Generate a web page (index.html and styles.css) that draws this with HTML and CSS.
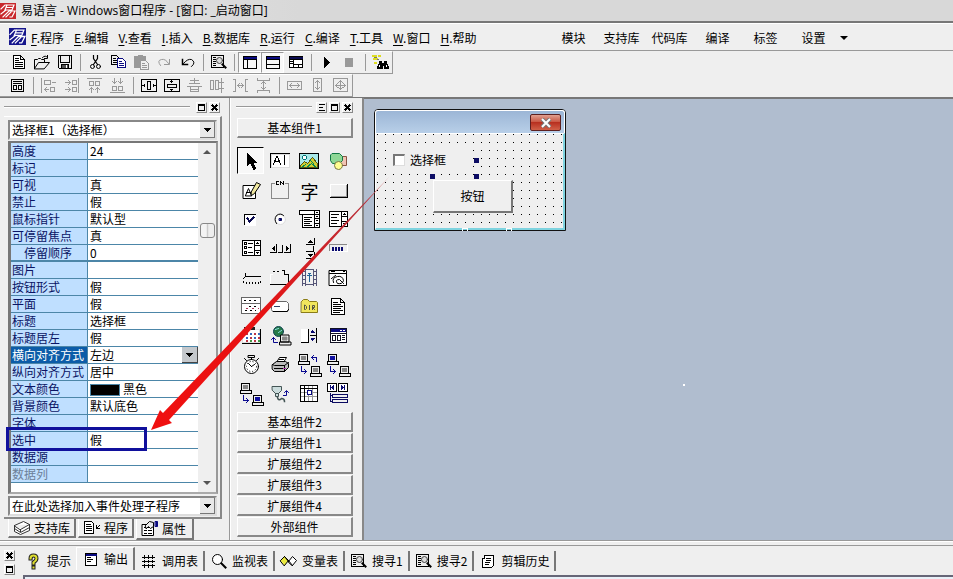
FILE: index.html
```html
<!DOCTYPE html>
<html lang="zh-CN">
<head>
<meta charset="utf-8">
<title>易语言</title>
<link rel="stylesheet" href="styles.css">
</head>
<body>
<svg class="defs" aria-hidden="true">
  <symbol id="pc" viewBox="-.5 -.5 12 11" overflow="visible"><path fill="#eee" d="M1 0H9V7H1ZM0 7H11V10H0Z"/><path stroke="#888" fill="#888" d="M3 2H7V5H3Z"/></symbol>
  <symbol id="pcb" viewBox="-.5 -.5 12 11" overflow="visible"><path fill="#eee" d="M1 0H9V7H1ZM0 7H11V10H0Z"/><path stroke="#1010a0" fill="#1010a0" d="M3 2H7V5H3Z"/></symbol>
  <symbol id="logo" viewBox="0 0 16 16"><path stroke="none" fill="currentColor" d="M0 0H16V16H0Z"/><path stroke="#fff" stroke-width="1.2" d="M1 6L5 2H14L12 7H5L7 2M6 4.500H13M1 11L6 7M3 14L9 8H15L12 14H10M6 14L11 9"/></symbol>
  <symbol id="find" viewBox="-.5 -.5 17 17"><path shape-rendering="crispEdges" d="M1 1H13V13H1ZM3 3H5M3 5H5M3 7H5M3 9H5M3 11H5"/><circle cx="9" cy="6" r="3" fill="#ddd" stroke="#444"/><path stroke-width="2" d="M12 10L15 13"/></symbol>
</svg>

<header class="title"><svg class="i logo-red" width="16" height="16"><use href="#logo"/></svg><h1>易语言 - Windows窗口程序 - [窗口: _启动窗口]</h1></header>

<nav class="menu" aria-label="菜单">
  <svg class="i logo-blue" width="17" height="17"><use href="#logo"/></svg>
  <button><u>F</u>.程序</button><button><u>E</u>.编辑</button><button><u>V</u>.查看</button><button><u>I</u>.插入</button><button><u>B</u>.数据库</button><button><u>R</u>.运行</button><button><u>C</u>.编译</button><button><u>T</u>.工具</button><button><u>W</u>.窗口</button><button><u>H</u>.帮助</button>
  <div class="quick"><button>模块</button><button>支持库</button><button>代码库</button><button>编译</button><button>标签</button><button>设置</button><i class="tri"></i></div>
</nav>

<div class="bars">
<div class="bar" role="toolbar" aria-label="标准">
  <button aria-label="新建"><svg class="i" viewBox="-.5 -.5 17 17"><path fill="#fff" d="M3 1H10L14 5V14H3ZM10 1V5H14M5 4H8M5 6H8M5 8H12M5 10H12M5 12H12"/></svg></button>
  <button aria-label="打开"><svg class="i s" viewBox="-.5 -.5 17 17"><path d="M1 14V5H4L5 4H7L8 5H11V8M1 14L5 8H16L11 14ZM9 3Q12 0 14 3M14 1V4H11"/></svg></button>
  <button aria-label="保存"><svg class="i" viewBox="-.5 -.5 17 17"><path d="M2 1H15V14H3L2 13ZM4 1V8H13V1"/><path fill="#555" d="M5 10H12V14H5Z"/><path stroke="#fff" d="M10 11V13"/></svg></button>
  <i class="sep"></i>
  <button aria-label="剪切"><svg class="i s" viewBox="-.5 -.5 17 17"><path stroke-width="1.200" d="M6 1V4L10 10M10 1V4L6 10"/><circle cx="5" cy="12" r="2"/><circle cx="11" cy="12" r="2"/></svg></button>
  <button aria-label="复制"><svg class="i" viewBox="-.5 -.5 17 17"><path d="M1 1H6L8 3V10H1ZM3 4H5M3 6H6M3 8H6"/><path stroke="#0a0a80" fill="#fff" d="M7 4H12L15 7V13H7ZM9 7H11M9 9H13M9 11H13"/></svg></button>
  <button aria-label="粘贴"><svg class="i g" viewBox="-.5 -.5 17 17"><path fill="#999" d="M1 2H5V1H9V2H12V13H1Z"/><path fill="#eee" d="M7 6H12L15 9V15H7ZM9 9H11M9 11H13M9 13H13"/></svg></button>
  <button aria-label="重做"><svg class="i g s" viewBox="-.5 -.5 17 17"><path d="M4 11Q0 6 5 5Q9 4 12 9M13 5V10H8"/></svg></button>
  <button aria-label="撤销"><svg class="i s" viewBox="-.5 -.5 17 17"><path d="M12 12Q17 8 12 5Q8 4 4 9"/><path stroke-width="1.500" d="M3 5V10H8"/></svg></button>
  <i class="sep"></i>
  <button aria-label="查找"><svg class="i s"><use href="#find"/></svg></button>
  <i class="sep"></i>
  <button class="on" aria-label="工作夹"><svg class="i" viewBox="-.5 -.5 17 17"><path d="M2 2H15V14H2ZM6 5V14"/><path stroke="#0a0a80" stroke-width="2" d="M3 3H14"/><path d="M2 5H15"/></svg></button>
  <button class="on" aria-label="状态夹"><svg class="i" viewBox="-.5 -.5 17 17"><path d="M2 2H15V14H2ZM2 10H15"/><path stroke="#0a0a80" stroke-width="2" d="M3 3H14"/><path d="M2 5H15"/></svg></button>
  <button aria-label="组件箱"><svg class="i" viewBox="-.5 -.5 17 17"><path fill="#fff" d="M2 2H15V13H2ZM6 5V13M6 10H15M11 10V13"/><path stroke="#0a0a50" stroke-width="2" d="M3 3H14"/><path d="M2 5H15M3 7H5M3 9H5"/></svg></button>
  <i class="sep"></i>
  <button aria-label="运行"><svg class="i" viewBox="-.5 -.5 17 17"><path fill="#000" d="M6 3L11 8L6 13Z"/></svg></button>
  <button aria-label="停止"><svg class="i g" viewBox="-.5 -.5 17 17"><path fill="#999" d="M4 4H11V12H4Z"/></svg></button>
  <i class="sep"></i>
  <button aria-label="搜寻"><svg class="i" viewBox="-.5 -.5 17 17"><path stroke="#dddd20" stroke-width="2" d="M0 1H3M6 1H7M1 4H4M2 8H3"/><path stroke="#777" d="M2 3H4M5 5H6"/><path fill="#000" d="M7 7H9V9H12V7H14V9L16 12V14H12V11H10V14H5V12L7 9Z"/><path stroke="#fff" d="M7 11V12M14 11V12"/></svg></button>
</div>
<div class="bar" role="toolbar" aria-label="对齐">
  <button aria-label="窗口"><svg class="i" viewBox="-.5 -.5 17 17"><path d="M2 2H14V14H2ZM4 4H12M4 6H12M4 8H7V12H4ZM9 8H12V12H9Z"/></svg></button>
  <i class="sep"></i>
  <button aria-label="左对齐"><svg class="i g" viewBox="-.5 -.5 17 17"><path d="M1 1V15M4 3H10V7H4ZM12 5H15M4 12H8M6 10L4 12L6 14M10 10H14V14H10Z"/></svg></button>
  <button aria-label="右对齐"><svg class="i g" viewBox="-.5 -.5 17 17"><path d="M15 1V15M2 5H7M5 3L7 5L5 7M9 3H13V7H9ZM2 12H7M5 10L7 12L5 14M9 10H13V14H9Z"/></svg></button>
  <button aria-label="顶对齐"><svg class="i g" viewBox="-.5 -.5 17 17"><path d="M1 1H15M3 4H7V8H3ZM9 4H13V8H9ZM5 10V15M3 12L5 10L7 12M11 10V15M9 12L11 10L13 12"/></svg></button>
  <button aria-label="底对齐"><svg class="i g" viewBox="-.5 -.5 17 17"><path d="M1 15H15M3 9H7V13H3ZM9 9H13V13H9ZM5 1V6M3 4L5 6L7 4M11 1V6M9 4L11 6L13 4"/></svg></button>
  <i class="sep"></i>
  <button aria-label="水平居中"><svg class="i" viewBox="-.5 -.5 17 17"><path d="M1 2H16V14H1ZM7 4H10V12H7ZM1 8H4M13 8H16M4 7V9M13 7V9"/></svg></button>
  <button aria-label="垂直居中"><svg class="i" viewBox="-.5 -.5 17 17"><path d="M1 2H16V14H1ZM4 7H13V10H4ZM8 2V5M8 12V14M7 4H9M7 12H9"/></svg></button>
  <button aria-label="水平等距"><svg class="i g" viewBox="-.5 -.5 17 17"><path d="M4 3H12M8 1V6M3 6H13M1 9H15M4 9V14H12V9M5 12H11"/></svg></button>
  <button aria-label="垂直等距"><svg class="i g" viewBox="-.5 -.5 17 17"><path d="M1 3H4V12H1ZM6 3H9V12H6ZM12 1V15M10 5H14M10 11H14"/></svg></button>
  <button aria-label="等宽间隔"><svg class="i g" viewBox="-.5 -.5 17 17"><path d="M1 2H3V14H1M15 2H13V14H15M5 8H11M7 6L5 8L7 10M9 6L11 8L9 10"/></svg></button>
  <button aria-label="等高间隔"><svg class="i g" viewBox="-.5 -.5 17 17"><path d="M2 1V3H14V1M2 15V13H14V15M8 4V12M6 6L8 4L10 6M6 10L8 12L10 10"/></svg></button>
  <i class="sep"></i>
  <button aria-label="同宽"><svg class="i g" viewBox="-.5 -.5 17 17"><path d="M1 4H15V12H1ZM3 8H13M5 6L3 8L5 10M11 6L13 8L11 10"/></svg></button>
  <button aria-label="同高"><svg class="i g" viewBox="-.5 -.5 17 17"><path d="M4 1H12V14H4ZM8 3V12M6 5L8 3L10 5M6 10L8 12L10 10"/></svg></button>
  <button aria-label="同大小"><svg class="i g" viewBox="-.5 -.5 17 17"><path d="M1 1H15V14H1ZM8 3V12M3 8H13M6 5L8 3L10 5M6 10L8 12L10 10M5 6L3 8L5 10M11 6L13 8L11 10"/></svg></button>
</div>
</div>

<main>
<aside class="dock">
  <div class="grip"><i></i><button aria-label="最大化"><svg class="i" viewBox="-.5 -.5 9 9"><path d="M1 1H7V7H1ZM1 2H7"/></svg></button><button aria-label="关闭"><svg class="i" viewBox="-.5 -.5 9 9"><path stroke-width="2" d="M2 2L6 6M6 2L2 6"/></svg></button></div>
  <div class="panel">
    <select class="combo" aria-label="组件"><option>选择框1（选择框）</option></select>
    <div class="list">
      <table>
        <tr><th>高度</th><td>24</td></tr>
        <tr><th>标记</th><td></td></tr>
        <tr><th>可视</th><td>真</td></tr>
        <tr><th>禁止</th><td>假</td></tr>
        <tr><th>鼠标指针</th><td>默认型</td></tr>
        <tr><th>可停留焦点</th><td>真</td></tr>
        <tr class="end"><th class="sub">停留顺序</th><td>0</td></tr>
        <tr><th>图片</th><td></td></tr>
        <tr><th>按钮形式</th><td>假</td></tr>
        <tr><th>平面</th><td>假</td></tr>
        <tr><th>标题</th><td>选择框</td></tr>
        <tr><th>标题居左</th><td>假</td></tr>
        <tr class="cur"><th><label for="align">横向对齐方式</label></th><td><select id="align"><option>左边</option></select></td></tr>
        <tr><th>纵向对齐方式</th><td>居中</td></tr>
        <tr><th>文本颜色</th><td><i class="swatch"></i>黑色</td></tr>
        <tr><th>背景颜色</th><td>默认底色</td></tr>
        <tr><th>字体</th><td></td></tr>
        <tr class="mark"><th>选中</th><td>假</td></tr>
        <tr><th>数据源</th><td></td></tr>
        <tr class="off"><th>数据列</th><td></td></tr>
      </table>
      <div class="scroll"><i class="up"></i><i class="thumb"></i><i class="down"></i></div>
    </div>
    <select class="combo" aria-label="事件"><option>在此处选择加入事件处理子程序</option></select>
  </div>
  <div class="tabs">
    <button><svg class="i s" viewBox="-.5 -.5 17 17"><path fill="#fff" stroke="#333" d="M1 6L10 2L16 5L7 10ZM1 6V9L7 13L16 8V5M1 9V12L7 15L16 11V8M7 10V12"/></svg>支持库</button>
    <button><svg class="i" viewBox="-.5 -.5 17 17"><path fill="#fff" d="M1 2H8L10 4V14H1ZM3 5H7M3 7H8M3 9H8M3 11H8M16 6L13 9M13 6V9H16"/></svg>程序</button>
    <button class="active"><svg class="i s" viewBox="-.5 -.5 17 17"><path fill="#fff" d="M1 4H12V15H1ZM3 7H5M7 7H10M3 10H5M7 10H10M3 13H5M7 13H10"/><path fill="#eee" d="M4 5L8 1L12 2V6L9 8L7 6L5 8Z"/><path stroke="#0a0a80" fill="#0a0a80" d="M14 1H16V6H14Z"/></svg>属性</button>
  </div>
</aside>

<aside class="palette">
  <div class="grip"><i></i><button aria-label="列表"><svg class="i" viewBox="-.5 -.5 9 9"><path d="M2 1H7M2 4H5M2 7H7"/></svg></button><button aria-label="最大化"><svg class="i" viewBox="-.5 -.5 9 9"><path d="M1 1H7V7H1ZM1 2H7"/></svg></button><button aria-label="关闭"><svg class="i" viewBox="-.5 -.5 9 9"><path stroke-width="2" d="M2 2L6 6M6 2L2 6"/></svg></button></div>
  <button class="group">基本组件1</button>
  <div class="tools">
    <button class="on" aria-label="指针"><svg class="i" viewBox="-.5 -.5 21 21"><path fill="#000" d="M6 2V14L9 11L12 18H13L14 17L11 11H15Z"/></svg></button>
    <button aria-label="编辑框"><svg class="i" viewBox="-.5 -.5 21 21"><path fill="#fff" stroke="#ddd" d="M1 3H19V16H1Z"/><path d="M0 16V2H19M3 13L6 5H7L10 13M4 10H9M14 4V13"/></svg></button>
    <button aria-label="图片框"><svg class="i" viewBox="-.5 -.5 21 21"><path fill="#a8e8e8" d="M0 2H19V17H0Z"/><path fill="#cccc30" stroke="#555510" d="M1 14L5 10L8 12L13 6L18 12V16H1Z"/><circle cx="5" cy="6" r="2" fill="#fff" stroke="#077"/><path stroke="#085" d="M2 16L6 13M11 9L14 12M7 16L12 12L17 16"/></svg></button>
    <button aria-label="外形框"><svg class="i s" viewBox="-.5 -.5 21 21"><path fill="#f2c4b4" stroke="#854" d="M9 5H18V14H10Z"/><path fill="#8ed896" stroke="#174" d="M4 2H11L14 5V9L11 12H4L2 9V4Z"/><circle cx="10" cy="14" r="4" fill="#ffff90" stroke="#774"/></svg></button>
    <button aria-label="画板"><svg class="i s" viewBox="-.5 -.5 21 21"><path fill="#fff" d="M2 5H14V18H2ZM4 15L7 8L10 15ZM5 12H9"/><path fill="#f0e8a0" d="M10 11L15 2L19 4L13 13L10 15Z"/></svg></button>
    <button aria-label="分组框"><svg class="i" viewBox="-.5 -.5 21 21"><path stroke="#888" d="M4 3H1V18H18V3H15"/><path d="M8 1H6V4H8M10 4V1L13 4V1"/></svg></button>
    <button aria-label="标签"><span class="zi">字</span></button>
    <button aria-label="按钮"><svg class="i" viewBox="-.5 -.5 21 21"><path stroke="#fff" d="M2 16V4H18"/><path d="M2 17H19V4"/><path stroke="#999" d="M3 16H18V5"/></svg></button>
    <button aria-label="选择框"><svg class="i" viewBox="-.5 -.5 21 21"><path stroke="#fff" fill="#fff" d="M4 6H14V16H4Z"/><path d="M3 15V5H14"/><path stroke="#0a0a50" stroke-width="2" d="M6 9L8 12L12 8"/></svg></button>
    <button aria-label="单选框"><svg class="i s" viewBox="-.5 -.5 21 21"><circle cx="10" cy="10" r="5" fill="#fff" stroke="#ddd"/><path d="M6 14Q3 10 6 6Q10 3 13 6"/><path fill="#0a0a60" stroke="#0a0a60" d="M9 9H11V11H9Z"/></svg></button>
    <button aria-label="组合框"><svg class="i" viewBox="-.5 -.5 21 21"><path fill="#fff" d="M0 1H20V5H0ZM3 5H20V18H3ZM15 1V18M5 8H12M5 10H10M5 12H12M5 14H10M5 16H12M15 9H20M15 14H20M17 3H18M17 7H18M17 11H18M17 16H18"/></svg></button>
    <button aria-label="列表框"><svg class="i" viewBox="-.5 -.5 21 21"><path fill="#fff" d="M1 2H19V17H1ZM13 2V17M3 5H10M3 8H8M3 11H10M3 14H8M13 7H19M13 12H19M15 5H17M16 4V5M15 14H17M16 15V14"/></svg></button>
    <button aria-label="选择列表框"><svg class="i" viewBox="-.5 -.5 21 21"><path fill="#fff" d="M1 2H19V17H1ZM13 2V17M3 4H5V6H3ZM3 8H5V10H3ZM3 13H5V15H3ZM7 5H11M7 9H10M7 14H11M13 7H19M13 12H19M15 5H17M16 4V5M15 14H17M16 15V14"/></svg></button>
    <button aria-label="横向滚动条"><svg class="i" viewBox="-.5 -.5 21 21"><path fill="#000" d="M4 8V12L2 10ZM16 8V12L18 10Z"/><path d="M0 14H6V6M8 14H12V7M14 14H20V6"/></svg></button>
    <button aria-label="纵向滚动条"><svg class="i" viewBox="-.5 -.5 21 21"><path fill="#000" d="M9 4H13L11 2ZM9 16H13L11 18Z"/><path d="M7 6H15V0M7 13H14V8M7 20H15V14"/></svg></button>
    <button aria-label="进度条"><svg class="i" viewBox="-.5 -.5 21 21"><path stroke="#888" d="M1 12V6H18"/><path stroke="#fff" d="M2 13H19V7"/><path stroke="#0a0a70" stroke-width="2" stroke-linecap="butt" d="M4 8V12M7 8V12M10 8V12M13 8V12"/></svg></button>
    <button aria-label="滑块条"><svg class="i" viewBox="-.5 -.5 21 21"><path d="M4 6V9L2 11M4 9H19M2 14V15M5 15V16M8 15V16M11 15V16M14 15V16M17 15V16M19 14V15"/></svg></button>
    <button aria-label="选择夹"><svg class="i" viewBox="-.5 -.5 21 21"><path stroke="#fff" d="M0 17V7H2"/><path d="M0 17H18V7M3 4H4M7 4H8M12 3H13M14 3V7H17"/></svg></button>
    <button aria-label="影像框"><svg class="i" viewBox="-.5 -.5 21 21"><path stroke="#557" d="M3 2V18M6 2V18M14 2V18M17 2V18M3 4H6M3 8H6M3 12H6M3 16H6M14 4H17M14 8H17M14 12H17M14 16H17M7 2H13M7 17H13"/><path stroke="#269" d="M9 6H11M10 6V14M8 8H12"/></svg></button>
    <button aria-label="超级编辑框"><svg class="i s" viewBox="-.5 -.5 21 21"><path fill="#fff" d="M1 3H18V18H1ZM1 6H18M3 4H6M15 4H16"/><path d="M5 15Q3 10 9 9Q14 8 15 13Q14 17 9 16Q6 12 11 12L15 16M3 11L7 8"/></svg></button>
    <button aria-label="日期框"><svg class="i" viewBox="-.5 -.5 21 21"><path fill="#fff" stroke="#666" d="M0 1H19V17H0ZM0 7H19"/><path stroke-dasharray="2 3" d="M2 4H17M7 10H17M3 14H14"/><path stroke="#a35" stroke-dasharray="2 4" d="M4 12H17"/></svg></button>
    <button aria-label="文本框"><svg class="i s" viewBox="-.5 -.5 21 21"><path fill="#fff" stroke="#666" d="M3 5H16L18 7V13L16 15H2L1 13V7Z"/><path stroke="#346" d="M4 10H9"/><path d="M3 15H17L18 13"/></svg></button>
    <button aria-label="目录框"><svg class="i s" viewBox="-.5 -.5 21 21"><path fill="#f1e65d" stroke="#8a7c18" d="M2 5L4 3H8L10 5H17L18 6V16H2Z"/><path stroke="#554" d="M5 9V13H6L7 12V10L6 9ZM10 9V13M13 13V9H15V11H13L15 13"/></svg></button>
    <button aria-label="文件框"><svg class="i" viewBox="-.5 -.5 21 21"><path fill="#fff" d="M3 2H12L16 6V18H3ZM12 2V6H16M5 6H9M5 8H12M5 10H14M5 12H12M5 14H14M5 16H11"/></svg></button>
    <button aria-label="月历"><svg class="i" viewBox="-.5 -.5 21 21"><path fill="#fff" stroke="#ddd" d="M1 4H18V17H1Z"/><path d="M1 18H19V4"/><path stroke="#222" stroke-width="3" stroke-dasharray="4 3" d="M2 3H14"/><path stroke="#b34" stroke-width="2" stroke-dasharray="2 6" d="M4 8H18M8 12H18M4 15H18"/><path stroke="#36b" stroke-width="2" stroke-dasharray="2 6" d="M8 8H18M4 12H18"/><path stroke="#494" stroke-width="2" stroke-dasharray="2 6" d="M8 15H18"/></svg></button>
    <button aria-label="网络"><svg class="i s" viewBox="-.5 -.5 21 21"><circle cx="8" cy="6" r="5" fill="#267a48" stroke="#145"/><path stroke="#8dd" d="M5 4L8 3M8 7L11 5"/><path stroke="#0a0a90" d="M3 12V17H7M1 14L3 12L5 14"/><use href="#pc" x="9" y="9" width="12" height="11"/></svg></button>
    <button aria-label="调节器"><svg class="i" viewBox="-.5 -.5 21 21"><path stroke="#fff" fill="#fff" d="M2 4H8V16H2Z"/><path d="M2 17H9V4M17 3V17M11 10H17"/><path stroke="#0a0a70" fill="#0a0a70" d="M12 7H15L13 5ZM12 13H15L13 15Z"/></svg></button>
    <button aria-label="窗口"><svg class="i" viewBox="-.5 -.5 21 21"><path fill="#fff" stroke="#112" d="M2 3H18V17H2ZM4 10H7V15H4ZM9 10H12V15H9ZM14 10H16M14 12H16M14 14H16M2 8H18"/><path stroke="#0a0a80" stroke-width="3" d="M4 5H16"/><path stroke="#fff" d="M12 5H13M15 5H16"/></svg></button>
    <button aria-label="时钟"><svg class="i s" viewBox="-.5 -.5 21 21"><circle cx="10" cy="12" r="7" fill="#fff"/><circle cx="10" cy="12" r="5" stroke-dasharray="1 2"/><path d="M7 1H13V3H7ZM10 3V5M10 12L7 9M10 12L13 10M3 4L5 6M17 4L15 6"/></svg></button>
    <button aria-label="打印机"><svg class="i s" viewBox="-.5 -.5 21 21"><path fill="#fff" d="M6 8L9 3H16L13 8"/><path fill="#bbb" d="M2 10L6 7H15L18 9V13L14 17H4L2 15Z"/><path d="M2 10L4 11H14L18 8M14 11V17M9 5H13M8 7H12M4 14H12"/><path stroke="#a3a" d="M13 14H15"/></svg></button>
    <button aria-label="客户"><svg class="i" viewBox="-.5 -.5 21 21"><use href="#pc" x="-2" y="-1" width="12" height="11"/><use href="#pc" x="10" y="11" width="12" height="11"/><path stroke="#0a0a90" d="M17 7V3H12M14 1L12 3L14 5M2 12V17H7M5 15L7 17L5 19"/></svg></button>
    <button aria-label="服务器"><svg class="i" viewBox="-.5 -.5 21 21"><use href="#pcb" x="-2" y="-1" width="12" height="11"/><use href="#pc" x="10" y="11" width="12" height="11"/><path stroke="#0a0a90" d="M2 12V17H7M5 15L7 17L5 19"/></svg></button>
    <button aria-label="数据报"><svg class="i" viewBox="-.5 -.5 21 21"><use href="#pc" x="-2" y="-1" width="12" height="11"/><use href="#pcb" x="10" y="11" width="12" height="11"/><path stroke="#0a0a90" d="M2 12V17H7M5 15L7 17L5 19"/></svg></button>
    <button aria-label="端口"><svg class="i s" viewBox="-.5 -.5 21 21"><path fill="#cdd" stroke="#455" d="M2 3H11V7L8 10H5L2 7ZM5 10V13H8V10"/><path stroke="#455" stroke-width="1.500" d="M7 14Q8 18 11 15Q14 15 14 18"/><path stroke="#0a0a90" d="M13 12H16V8M14 9L16 7L18 9"/></svg></button>
    <button aria-label="表格"><svg class="i" viewBox="-.5 -.5 21 21"><path fill="#fff" d="M1 2H18V18H1Z"/><path stroke="#999" d="M9 3V17M13 3V17M2 9H17M2 13H17"/><path d="M1 2H18V18H1ZM5 2V18M1 5H18"/><path fill="#fff" stroke="#0a0a80" d="M8 7H12V11H8Z"/></svg></button>
    <button aria-label="数据源"><svg class="i" viewBox="-.5 -.5 21 21"><path fill="#fff" d="M-1 0H8V8H-1ZM10 0H19V8H10Z"/><path fill="#0a0a70" stroke="#0a0a70" d="M2 2V6M5 2V6L3 4ZM16 2V6M13 2V6L15 4Z"/><path stroke="#0a0a60" d="M2 10V18H4M2 12H4M4 11H19V14H4ZM4 16H19V19H4Z"/></svg></button>
  </div>
  <div class="groups"><button class="group">基本组件2</button><button class="group">扩展组件1</button><button class="group">扩展组件2</button><button class="group">扩展组件3</button><button class="group">扩展组件4</button><button class="group">外部组件</button></div>
</aside>

<section class="canvas" aria-label="设计区">
  <div class="form">
    <div class="cap"><button aria-label="关闭"><svg viewBox="0 0 12 10" width="12" height="10"><path d="M2 1L10 9M10 1L2 9" stroke="#777" stroke-width="4"/><path d="M2 1L10 9M10 1L2 9" stroke="#fff" stroke-width="2"/></svg></button></div>
    <div class="body">
      <label class="check"><input type="checkbox">选择框</label>
      <button class="push">按钮</button>
      <i class="h h1"></i><i class="h h2"></i><i class="h h3"></i>
      <i class="w w1"></i><i class="w w2"></i>
    </div>
  </div>
  <i class="speck"></i>
</section>
</main>

<footer>
  <div class="mini"><button aria-label="关闭"><svg class="i" viewBox="-.5 -.5 9 9"><path stroke-width="2" d="M2 2L6 6M6 2L2 6"/></svg></button><button aria-label="最大化"><svg class="i" viewBox="-.5 -.5 9 9"><path d="M1 1H7V7H1ZM1 2H7"/></svg></button></div>
  <div class="out">
    <div class="otabs">
      <button><svg class="i s" viewBox="-.5 -.5 17 17"><path stroke="#222" stroke-width="4" d="M5 5Q5 2 8 2Q11 2 11 5Q11 7 8 9V10M8 14V14"/><path stroke="#dede30" stroke-width="2" d="M5 5Q5 2 8 2Q11 2 11 5Q11 7 8 9V10M8 14V14"/></svg>提示</button>
      <button class="active"><svg class="i" viewBox="-.5 -.5 17 17"><path fill="#fff" d="M3 2H14V14H3ZM5 6H8M5 8H10M5 10H8"/><path stroke="#0a0a80" stroke-width="2" d="M4 3H13"/></svg>输出</button>
      <button><svg class="i" viewBox="-.5 -.5 17 17"><path d="M4 2V5M8 2V5M12 2V5M4 7V9M8 7V9M12 7V9M4 11V14M8 11V14M12 11V14M2 4H14M2 8H14M2 12H14"/></svg>调用表</button>
      <button><svg class="i s" viewBox="-.5 -.5 17 17"><circle cx="7" cy="6" r="5" fill="#fff"/><path stroke-width="2" d="M11 10L15 14"/></svg>监视表</button>
      <button><svg class="i s" viewBox="-.5 -.5 17 17"><path fill="#eaea40" d="M0 7L4 3L8 7L4 12Z"/><path fill="#fff" d="M8 8L12 3L16 7L12 12Z"/><path d="M4 3L8 8M8 7L12 12"/></svg>变量表</button>
      <button><svg class="i s"><use href="#find"/></svg>搜寻1</button>
      <button><svg class="i s"><use href="#find"/></svg>搜寻2</button>
      <button><svg class="i" viewBox="-.5 -.5 17 17"><path fill="#fff" d="M5 2H14V12L12 14H3V5H5ZM7 5H11M7 7H11M6 9H10M6 11H9"/></svg>剪辑历史</button>
    </div>
    <div class="pane"></div>
  </div>
</footer>
<svg class="arrow" viewBox="150 174 242 258" aria-hidden="true"><defs><linearGradient id="fade" x1="0" y1="1" x2="1" y2="0"><stop offset="0" stop-color="#f01010"/><stop offset=".45" stop-color="#e81212"/><stop offset=".9" stop-color="#b8303a"/><stop offset="1" stop-color="#e0a0a4"/></linearGradient></defs><path fill="url(#fade)" d="M151 430L160 410L163 413L390 176L169 420L172 423Z"/></svg>
</body>
</html>
```
FILE: styles.css
```css
*, *::after { box-sizing: border-box; }
body {
  margin: 0;
  height: 100vh;
  position: relative;
  display: flex;
  flex-direction: column;
  overflow: hidden;
  background: #efefef;
  color: #000;
  font: 12px/16px "Noto Sans CJK SC", sans-serif;
}
button, select, input { font: inherit; color: inherit; margin: 0; }
button { border: 0; padding: 0; background: none; }
svg { display: block; flex: none; }
.defs { position: absolute; width: 0; height: 0; }
.i { fill: none; stroke: #000; stroke-linecap: square; shape-rendering: crispEdges; overflow: visible; }
.i [stroke-dasharray] { stroke-linecap: butt; }
.s { shape-rendering: auto; }
.g { stroke: #999; }

.title {
  display: flex;
  align-items: center;
  gap: 5px;
  height: 23px;
  background: linear-gradient(90deg, #e6e6e6, #d8d8d8 300px);
  border-bottom: 2px solid #777;
}
.title h1 { margin: 0; font: 12px/20px "Open Sans", "Noto Sans CJK SC", sans-serif; }
.logo-red { color: #c8282c; shape-rendering: auto; }
.logo-blue { color: #16168c; margin-bottom: 4px; shape-rendering: auto; }

.menu {
  display: flex;
  align-items: center;
  gap: 10px;
  height: 28px;
  padding: 2px 0 0 9px;
  border-top: 1px solid #fff;
  border-bottom: 1px solid #999;
}
.menu > .logo-blue { margin-right: -5px; }
.menu u { text-underline-offset: 2px; }
.quick { display: flex; align-items: center; margin-left: 63px; }
.quick button { width: 48px; }
.tri { border: 4px solid transparent; border-top-color: #000; border-bottom: 0; margin-left: 2px; }

.bars { border-bottom: 1px solid #777; }
.bar {
  display: flex;
  align-items: center;
  width: max-content;
  height: 23px;
  padding: 0 0 0 6px;
  border-top: 1px solid #fff;
  border-right: 1px solid #999;
  border-bottom: 1px solid #999;
}
.bar button { width: 23px; height: 21px; padding: 2px 3px; }
.bar svg { width: 17px; height: 17px; }
.bar:first-child { padding-left: 7px; }
.bar .on { background: #f8f8f8; border: 1px solid #999; border-right-color: #fff; border-bottom-color: #fff; padding: 1px 2px; }
.sep { width: 1px; height: 17px; margin: 0 3px 0 4px; background: #999; }

main { flex: 1; display: flex; min-height: 0; border-bottom: 1px solid #999; }
.grip { display: flex; align-items: center; gap: 2px; height: 18px; }
.grip > i { flex: 1; height: 2px; margin-right: 2px; background: #999; border-bottom: 1px solid #fff; }
.grip button, .mini button { width: 11px; height: 11px; padding: 1px; border: 1px solid #fff; border-right-color: #888; border-bottom-color: #888; }
.grip svg, .mini svg { width: 9px; height: 9px; margin: -1px; }

.dock { display: flex; flex-direction: column; width: 230px; padding: 0 9px 0 4px; border-right: 1px solid #999; }
.dock .grip > i { margin-right: 4px; }
.panel {
  flex: 1;
  display: flex;
  flex-direction: column;
  gap: 1px;
  min-height: 0;
  padding: 3px 0 1px 4px;
  width: 218px;
  border-top: 1px solid #fff;
  border-right: 2px solid #888;
  border-bottom: 2px solid #888;
}
.combo, #align { appearance: none; border-radius: 0; outline: 0; }
.combo {
  flex: none;
  width: 209px;
  height: 20px;
  padding: 0 0 0 2px;
  border: 2px solid #888;
  border-right-color: #ddd;
  border-bottom-color: #ddd;
  background:
    linear-gradient(#000, #000) no-repeat right 4px top 6px / 7px 1px,
    linear-gradient(#000, #000) no-repeat right 5px top 7px / 5px 1px,
    linear-gradient(#000, #000) no-repeat right 6px top 8px / 3px 1px,
    linear-gradient(#000, #000) no-repeat right 7px top 9px / 1px 1px,
    linear-gradient(#e8e8e8, #e8e8e8) no-repeat right 1px top 0 / 14px 15px,
    linear-gradient(#777, #777) no-repeat right / 15px 100%,
    #fff;
}
.list {
  flex: 1;
  display: flex;
  min-height: 0;
  width: 210px;
  margin-bottom: 1px;
  background: #fff;
  border: 2px solid #777;
  border-left-width: 3px;
  border-right-color: #999;
  border-bottom-color: #aaa;
}
table { flex: 1; align-self: flex-start; border-spacing: 0; table-layout: fixed; }
th, td { height: 17px; padding: 0 0 0 2px; line-height: 16px; border-bottom: 1px solid #4c86a8; text-align: left; font-weight: 400; white-space: nowrap; }
th { width: 77px; padding-left: 1px; color: #0a1464; background: #bfdfff; border-right: 1px solid #4c86a8; }
.sub { padding-left: 13px; }
.end th, .end td { border-bottom-width: 2px; line-height: 15px; }
.cur th { color: #fff; background: #0c5ca8; }
.off th { color: #6c8098; }
#align {
  display: block;
  width: 100%;
  height: 16px;
  padding: 0;
  border: 0;
  background:
    linear-gradient(#000, #000) no-repeat right 5px top 6px / 7px 1px,
    linear-gradient(#000, #000) no-repeat right 6px top 7px / 5px 1px,
    linear-gradient(#000, #000) no-repeat right 7px top 8px / 3px 1px,
    linear-gradient(#000, #000) no-repeat right 8px top 9px / 1px 1px,
    linear-gradient(#c4c8cc, #c4c8cc) no-repeat right 1px top 0 / 15px 15px,
    linear-gradient(#444, #444) no-repeat right / 16px 100%,
    #fff;
}
.swatch { display: inline-block; width: 30px; height: 12px; margin-right: 3px; vertical-align: -2px; background: #000; border: 1px solid #4c86a8; }
.mark th { position: relative; }
.mark th::after { content: ""; position: absolute; z-index: 1; left: -5px; top: -5px; width: 141px; height: 24px; border: 3px solid #10109c; }
.scroll { display: flex; flex-direction: column; align-items: center; width: 18px; padding: 7px 0; background: #efefef; }
.up { border: 4px solid transparent; border-top: 0; border-bottom-color: #555; }
.down { border: 4px solid transparent; border-bottom: 0; border-top-color: #555; margin-top: auto; }
.thumb { width: 15px; height: 15px; margin-top: 69px; border: 1px solid #888; border-radius: 3px; background: linear-gradient(90deg, #f4f4f4 40%, #ccc 50%, #eee 60%); }

.tabs { display: flex; align-items: flex-start; height: 21px; padding-left: 4px; gap: 2px; }
.tabs button { display: flex; align-items: center; gap: 4px; height: 19px; padding: 0 4px; white-space: nowrap; border-left: 1px solid #fff; border-right: 2px solid #777; border-bottom: 2px solid #777; }
.tabs svg { width: 17px; height: 17px; }
.tabs .active { height: 21px; padding-right: 6px; background: #efefef; }

.palette { display: flex; flex-direction: column; width: 134px; padding: 0 9px 0 6px; border-left: 1px solid #fff; border-right: 2px solid #888; }
.palette .grip { margin-left: -1px; }
.group { display: block; width: 100%; height: 20px; line-height: 18px; border: 1px solid #fff; border-right: 2px solid #888; border-bottom: 2px solid #888; }
.grip + .group { margin-top: 2px; flex: none; }
.tools { display: grid; grid-template-columns: repeat(4, 29px); grid-auto-rows: 29px; margin: 9px 0 4px; }
.tools button { padding: 4px; }
.tools svg { width: 21px; height: 21px; }
.tools .on { width: 27px; height: 27px; padding: 3px; background: #f8f8f8; border: 1px solid #000; border-right-color: #fff; border-bottom-color: #fff; }
.zi { display: block; font-size: 18px; line-height: 20px; }
.groups { display: grid; gap: 1px; }

.canvas { flex: 1; position: relative; background: #b0bdcf; border-top: 1px solid #777; }
.form { position: absolute; left: 10px; top: 10px; width: 192px; border: 1px solid #111; border-radius: 4px 4px 0 0; background: #efefef; }
.cap { display: flex; justify-content: flex-end; height: 23px; padding: 3px; border: 1px solid #fff; border-bottom: 0; border-radius: 3px 3px 0 0; background: linear-gradient(#9cb6d6, #b8cfe8); }
.cap button { display: grid; place-items: center; width: 31px; height: 17px; background: linear-gradient(#e0a090, #c8503c 50%, #b83020 50%, #d06048); border: 1px solid #5c2020; border-radius: 2px; }
.body { position: relative; height: 97px; border: 1px solid #fff; border-right: 2px solid #7fd4e0; border-bottom: 2px solid #7fd4e0; background: conic-gradient(from 270deg at 1px 1px, #000 90deg, transparent 0) 1px 0 / 8px 8px; }
.check { position: absolute; left: 15px; top: 14px; display: flex; align-items: center; gap: 5px; width: 80px; height: 24px; background: #efefef; }
.check input { appearance: none; width: 12px; height: 12px; margin-left: 2px; background: #fff; border: 2px solid #777; border-right: 1px solid #ddd; border-bottom: 1px solid #ddd; }
.push { position: absolute; left: 57px; top: 46px; width: 80px; height: 33px; background: #efefef; border: 1px solid #fff; border-right: 2px solid #777; border-bottom: 2px solid #777; }
.h { position: absolute; width: 5px; height: 5px; background: #0c0c64; }
.h1 { left: 98px; top: 24px; }
.h2 { left: 54px; top: 40px; }
.h3 { left: 98px; top: 40px; }
.w { position: absolute; width: 6px; height: 3px; bottom: -3px; border: 1px solid #fff; border-bottom: 0; }
.w1 { left: 86px; }
.w2 { left: 130px; }
.speck { position: absolute; left: 319px; top: 285px; width: 2px; height: 2px; background: #fff; }

footer { display: flex; height: 38px; border-top: 1px solid #fff; box-shadow: inset 0 3px #efefef, inset 0 4px #999; }
.mini { width: 23px; padding: 8px 0 0 4px; }
.mini button { display: block; margin-bottom: 3px; }
.out { flex: 1; display: flex; flex-direction: column; }
.otabs { display: flex; align-items: flex-end; height: 33px; padding: 0 0 4px 1px; }
.otabs button { display: flex; align-items: center; gap: 5px; height: 20px; padding: 0 5px; white-space: nowrap; border-right: 2px solid #777; }
.otabs button:first-child { border-right: 0; padding-left: 1px; }
.otabs .active { height: 23px; margin-bottom: 1px; border-left: 1px solid #fff; border-top: 1px solid #fff; }
.otabs svg { width: 17px; height: 17px; }
.pane { flex: 1; border-top: 2px solid #667; border-left: 2px solid #667; background: #e8f0f8; }
.arrow { position: absolute; z-index: 2; left: 150px; top: 174px; width: 242px; height: 258px; pointer-events: none; }
```
